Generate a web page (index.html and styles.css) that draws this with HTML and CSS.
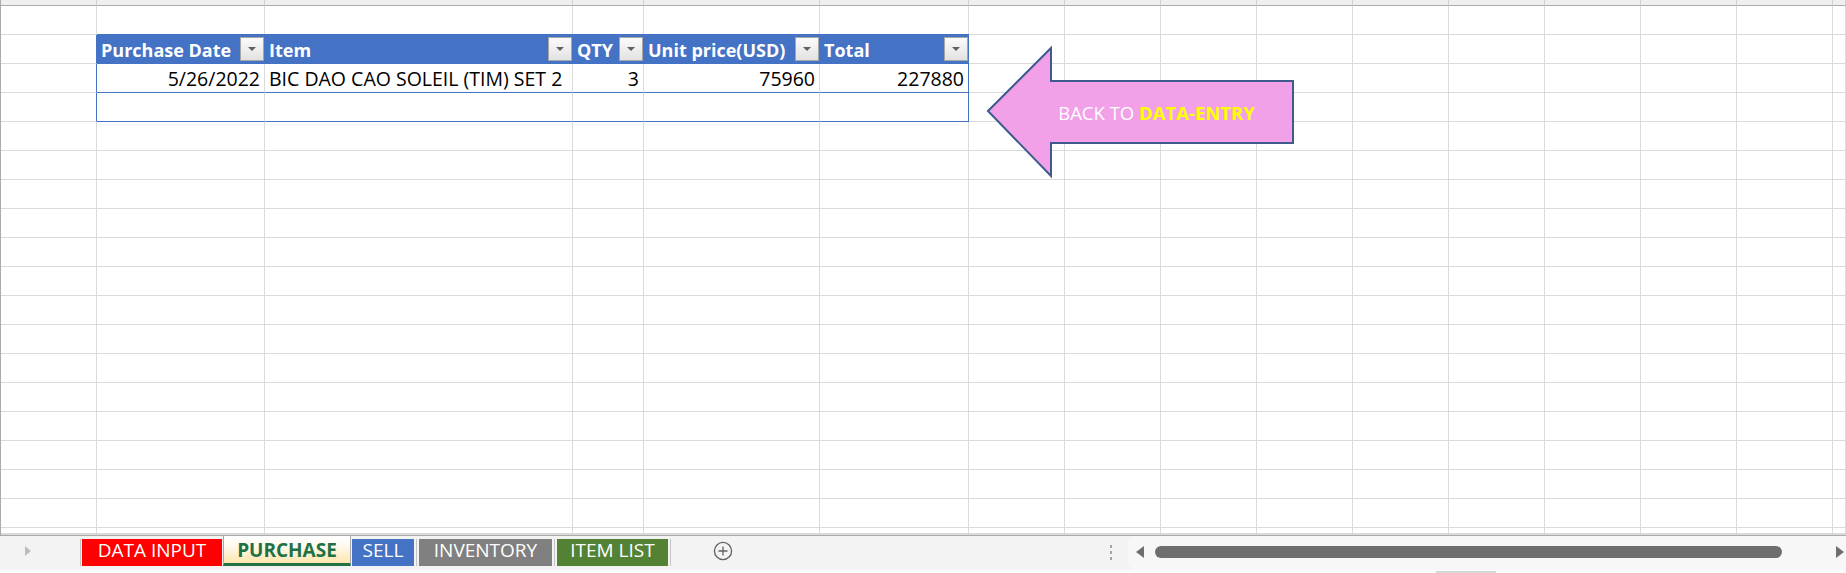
FILE: index.html
```html
<!DOCTYPE html>
<html>
<head>
<meta charset="utf-8">
<title>PURCHASE</title>
<link rel="stylesheet" href="styles.css">
</head>
<body>
<div class="app">
  <div class="sheet">
    <i class="c h0"></i><i class="c h0"></i><i class="c h0"></i><i class="c h0"></i><i class="c h0"></i><i class="c h0"></i><i class="c h0"></i><i class="c h0"></i><i class="c h0"></i><i class="c h0"></i><i class="c h0"></i><i class="c h0"></i><i class="c h0"></i><i class="c h0"></i><i class="c h0"></i><i class="c h0"></i>

    <i class="c"></i><i class="c"></i><i class="c"></i><i class="c"></i><i class="c"></i><i class="c"></i><i class="c"></i><i class="c"></i><i class="c"></i><i class="c"></i><i class="c"></i><i class="c"></i><i class="c"></i><i class="c"></i><i class="c"></i><i class="c"></i>

    <i class="c tl"></i>
    <div class="th"><span class="tht">Purchase Date</span><b class="dd"></b></div>
    <div class="th"><span class="tht">Item</span><b class="dd"></b></div>
    <div class="th"><span class="tht">QTY</span><b class="dd"></b></div>
    <div class="th"><span class="tht">Unit price(USD)</span><b class="dd"></b></div>
    <div class="th"><span class="tht">Total</span><b class="dd"></b></div>
    <i class="c"></i><i class="c"></i><i class="c"></i><i class="c"></i><i class="c"></i><i class="c"></i><i class="c"></i><i class="c"></i><i class="c"></i><i class="c"></i>

    <i class="c tl"></i>
    <div class="c td num">5/26/2022</div>
    <div class="c td">BIC DAO CAO SOLEIL (TIM) SET 2</div>
    <div class="c td num">3</div>
    <div class="c td num">75960</div>
    <div class="c td num tr">227880</div>
    <i class="c"></i><i class="c"></i><i class="c"></i><i class="c"></i><i class="c"></i><i class="c"></i><i class="c"></i><i class="c"></i><i class="c"></i><i class="c"></i>

    <i class="c tl"></i>
    <div class="c td"></div>
    <div class="c td"></div>
    <div class="c td"></div>
    <div class="c td"></div>
    <div class="c td tr"></div>
    <i class="c"></i><i class="c"></i><i class="c"></i><i class="c"></i><i class="c"></i><i class="c"></i><i class="c"></i><i class="c"></i><i class="c"></i><i class="c"></i>

    <i class="c"></i><i class="c"></i><i class="c"></i><i class="c"></i><i class="c"></i><i class="c"></i><i class="c"></i><i class="c"></i><i class="c"></i><i class="c"></i><i class="c"></i><i class="c"></i><i class="c"></i><i class="c"></i><i class="c"></i><i class="c"></i>
    <i class="c"></i><i class="c"></i><i class="c"></i><i class="c"></i><i class="c"></i><i class="c"></i><i class="c"></i><i class="c"></i><i class="c"></i><i class="c"></i><i class="c"></i><i class="c"></i><i class="c"></i><i class="c"></i><i class="c"></i><i class="c"></i>
    <i class="c"></i><i class="c"></i><i class="c"></i><i class="c"></i><i class="c"></i><i class="c"></i><i class="c"></i><i class="c"></i><i class="c"></i><i class="c"></i><i class="c"></i><i class="c"></i><i class="c"></i><i class="c"></i><i class="c"></i><i class="c"></i>
    <i class="c"></i><i class="c"></i><i class="c"></i><i class="c"></i><i class="c"></i><i class="c"></i><i class="c"></i><i class="c"></i><i class="c"></i><i class="c"></i><i class="c"></i><i class="c"></i><i class="c"></i><i class="c"></i><i class="c"></i><i class="c"></i>
    <i class="c"></i><i class="c"></i><i class="c"></i><i class="c"></i><i class="c"></i><i class="c"></i><i class="c"></i><i class="c"></i><i class="c"></i><i class="c"></i><i class="c"></i><i class="c"></i><i class="c"></i><i class="c"></i><i class="c"></i><i class="c"></i>
    <i class="c"></i><i class="c"></i><i class="c"></i><i class="c"></i><i class="c"></i><i class="c"></i><i class="c"></i><i class="c"></i><i class="c"></i><i class="c"></i><i class="c"></i><i class="c"></i><i class="c"></i><i class="c"></i><i class="c"></i><i class="c"></i>
    <i class="c"></i><i class="c"></i><i class="c"></i><i class="c"></i><i class="c"></i><i class="c"></i><i class="c"></i><i class="c"></i><i class="c"></i><i class="c"></i><i class="c"></i><i class="c"></i><i class="c"></i><i class="c"></i><i class="c"></i><i class="c"></i>
    <i class="c"></i><i class="c"></i><i class="c"></i><i class="c"></i><i class="c"></i><i class="c"></i><i class="c"></i><i class="c"></i><i class="c"></i><i class="c"></i><i class="c"></i><i class="c"></i><i class="c"></i><i class="c"></i><i class="c"></i><i class="c"></i>
    <i class="c"></i><i class="c"></i><i class="c"></i><i class="c"></i><i class="c"></i><i class="c"></i><i class="c"></i><i class="c"></i><i class="c"></i><i class="c"></i><i class="c"></i><i class="c"></i><i class="c"></i><i class="c"></i><i class="c"></i><i class="c"></i>
    <i class="c"></i><i class="c"></i><i class="c"></i><i class="c"></i><i class="c"></i><i class="c"></i><i class="c"></i><i class="c"></i><i class="c"></i><i class="c"></i><i class="c"></i><i class="c"></i><i class="c"></i><i class="c"></i><i class="c"></i><i class="c"></i>
    <i class="c"></i><i class="c"></i><i class="c"></i><i class="c"></i><i class="c"></i><i class="c"></i><i class="c"></i><i class="c"></i><i class="c"></i><i class="c"></i><i class="c"></i><i class="c"></i><i class="c"></i><i class="c"></i><i class="c"></i><i class="c"></i>
    <i class="c"></i><i class="c"></i><i class="c"></i><i class="c"></i><i class="c"></i><i class="c"></i><i class="c"></i><i class="c"></i><i class="c"></i><i class="c"></i><i class="c"></i><i class="c"></i><i class="c"></i><i class="c"></i><i class="c"></i><i class="c"></i>
    <i class="c"></i><i class="c"></i><i class="c"></i><i class="c"></i><i class="c"></i><i class="c"></i><i class="c"></i><i class="c"></i><i class="c"></i><i class="c"></i><i class="c"></i><i class="c"></i><i class="c"></i><i class="c"></i><i class="c"></i><i class="c"></i>
    <i class="c"></i><i class="c"></i><i class="c"></i><i class="c"></i><i class="c"></i><i class="c"></i><i class="c"></i><i class="c"></i><i class="c"></i><i class="c"></i><i class="c"></i><i class="c"></i><i class="c"></i><i class="c"></i><i class="c"></i><i class="c"></i>
    <i class="c"></i><i class="c"></i><i class="c"></i><i class="c"></i><i class="c"></i><i class="c"></i><i class="c"></i><i class="c"></i><i class="c"></i><i class="c"></i><i class="c"></i><i class="c"></i><i class="c"></i><i class="c"></i><i class="c"></i><i class="c"></i>

    <i class="c"></i><i class="c"></i><i class="c"></i><i class="c"></i><i class="c"></i><i class="c"></i><i class="c"></i><i class="c"></i><i class="c"></i><i class="c"></i><i class="c"></i><i class="c"></i><i class="c"></i><i class="c"></i><i class="c"></i><i class="c"></i>

    <div class="arrow">
      <svg class="arrow-shape" width="320" height="145" viewBox="0 0 320 145">
        <polygon points="7,71 70,8 70,41 312,41 312,103 70,103 70,136" fill="#f2a1e8" stroke="#3f5b8d" stroke-width="2" stroke-linejoin="miter"/>
      </svg>
      <span class="arrow-label">BACK TO <b class="hl">DATA-ENTRY</b></span>
    </div>
  </div>

  <div class="tabs">
    <div class="nav"><i class="nav-tri"></i></div>
    <i class="sep"></i>
    <div class="tab t-input">DATA INPUT</div>
    <div class="tab t-purchase">PURCHASE</div>
    <div class="tab t-sell">SELL</div>
    <i class="sep sep-wide"></i>
    <div class="tab t-inv">INVENTORY</div>
    <i class="sep sep-wide"></i>
    <div class="tab t-item">ITEM LIST</div>
    <i class="sep sep-wide"></i>
    <svg class="plus" width="20" height="20" viewBox="0 0 20 20">
      <circle cx="10" cy="10" r="8.6" fill="none" stroke="#616161" stroke-width="1.3"/>
      <path d="M10 5.5v9M5.5 10h9" stroke="#616161" stroke-width="1.3" fill="none"/>
    </svg>
    <div class="right">
      <div class="dots"><i></i><i></i><i></i></div>
      <div class="hscroll">
        <i class="arr-l"></i>
        <i class="thumb"></i>
        <i class="arr-r"></i>
      </div>
    </div>
  </div>
  <div class="status"><i class="grip"></i></div>
</div>
</body>
</html>
```

FILE: styles.css
```css
html, body {
  margin: 0;
  padding: 0;
  background: #ffffff;
}
body {
  width: 1846px;
  height: 573px;
  overflow: hidden;
  font-family: "Open Sans", "Liberation Sans", sans-serif;
}
.app {
  width: 1846px;
  height: 573px;
  display: flex;
  flex-direction: column;
}

/* ---------- sheet grid ---------- */
.sheet {
  position: relative;
  height: 536px;
  flex: none;
  box-sizing: border-box;
  border-left: 1px solid #ababab;
  border-bottom: 1px solid #ababab;
  display: grid;
  grid-template-columns: 96px 168px 308px 71px 176px 149px repeat(9, 96px) 1fr;
  grid-template-rows: 6px repeat(18, 29px) 1fr;
  overflow: hidden;
}
.c {
  display: flex;
  align-items: flex-end;
  box-sizing: border-box;
  min-width: 0;
  min-height: 0;
  overflow: hidden;
  white-space: nowrap;
  border-right: 1px solid #dadada;
  border-bottom: 1px solid #dadada;
  font-style: normal;
}
.h0 {
  background: #efefef;
  border-right-color: #d0d0d0;
  border-bottom-color: #ababab;
}
.tl {
  border-right-color: #4472c4;
}

/* ---------- table ---------- */
.th {
  margin-top: -1px;
  display: flex;
  align-items: stretch;
  box-sizing: border-box;
  min-width: 0;
  padding-left: 4px;
  background: #4472c4;
  border-right: 1px solid #4472c4;
  border-bottom: 1px solid #4472c4;
  overflow: hidden;
  white-space: nowrap;
}
.tht {
  align-self: flex-end;
  padding-bottom: 4px;
  font-size: 18px;
  line-height: 1;
  font-weight: 700;
  color: #ffffff;
}
.dd {
  position: relative;
  align-self: flex-start;
  flex: none;
  margin-top: 3px;
  margin-left: auto;
  width: 24px;
  height: 24px;
  box-sizing: border-box;
  border: 1px solid #a6a6a6;
  background: linear-gradient(#fbfbfb, #e2e2e2);
}
.dd::after {
  content: "";
  position: absolute;
  left: 7px;
  top: 9px;
  border-left: 4px solid transparent;
  border-right: 4px solid transparent;
  border-top: 4px solid #606060;
}
.td {
  padding: 0 4px 4px 4px;
  font-size: 19.5px;
  line-height: 1;
  color: #000000;
  border-bottom-color: #4472c4;
}
.num {
  justify-content: flex-end;
}
.tr {
  border-right-color: #4472c4;
}

/* ---------- arrow shape ---------- */
.arrow {
  position: absolute;
  left: 980px;
  top: 40px;
  width: 320px;
  height: 145px;
  display: flex;
  align-items: center;
  justify-content: center;
  box-sizing: border-box;
  padding-left: 31px;
}
.arrow-shape {
  position: absolute;
  left: 0;
  top: 0;
}
.arrow-label {
  position: relative;
  font-size: 18.5px;
  color: #ffffff;
  white-space: nowrap;
}
.hl {
  color: #ffff00;
  font-weight: 700;
}

/* ---------- sheet tabs ---------- */
.tabs {
  height: 34px;
  flex: none;
  display: flex;
  align-items: flex-start;
  background: #f3f3f3;
}
.nav {
  width: 80px;
  height: 34px;
  flex: none;
}
.nav-tri {
  display: block;
  margin: 10px 0 0 25px;
  width: 0;
  height: 0;
  border-left: 6px solid #bdbdbd;
  border-top: 5px solid transparent;
  border-bottom: 5px solid transparent;
}
.sep {
  display: block;
  width: 1px;
  height: 27px;
  margin-top: 3px;
  background: #c4c4c4;
  flex: none;
}
.sep-wide {
  margin-left: 2px;
  margin-right: 2px;
}
.tab {
  flex: none;
  height: 27px;
  margin-top: 3px;
  box-sizing: border-box;
  display: flex;
  align-items: center;
  justify-content: center;
  padding-bottom: 5px;
  font-size: 19px;
  color: #ffffff;
  white-space: nowrap;
}
.t-input {
  margin-left: 1px;
  width: 140px;
  background: #ff0000;
}
.t-purchase {
  margin-left: 1px;
  margin-top: 0;
  width: 128px;
  height: 30px;
  padding-bottom: 0;
  border-left: 1px solid #a9a9a9;
  border-right: 1px solid #a9a9a9;
  border-bottom: 3px solid #217346;
  background: linear-gradient(#ffffff 0%, #fffaf0 35%, #fde6ad 100%);
  color: #1e7145;
  font-weight: 700;
}
.t-sell {
  margin-left: 1px;
  width: 62px;
  background: #4472c4;
}
.t-inv {
  width: 133px;
  background: #808080;
}
.t-item {
  width: 111px;
  background: #548235;
}
.plus {
  flex: none;
  margin: 5px 0 0 40px;
}
.right {
  margin-left: auto;
  width: 741px;
  height: 34px;
  display: flex;
  flex: none;
}
.dots {
  width: 23px;
  height: 34px;
  flex: none;
  display: flex;
  flex-direction: column;
  align-items: flex-start;
  padding: 9px 0 0 5px;
  box-sizing: border-box;
  gap: 3px;
}
.dots i {
  display: block;
  width: 2px;
  height: 3px;
  background: #a6a6a6;
}
.hscroll {
  flex: 1;
  height: 34px;
  display: flex;
  align-items: flex-start;
  padding-left: 8px;
  box-sizing: border-box;
  background: #f7f7f7;
  border-radius: 8px 0 0 8px;
  overflow: hidden;
}
.arr-l {
  display: block;
  flex: none;
  margin-top: 46px;
  margin-top: 10px;
  width: 0;
  height: 0;
  border-right: 8px solid #6e6e6e;
  border-top: 6px solid transparent;
  border-bottom: 6px solid transparent;
}
.thumb {
  display: block;
  flex: none;
  margin: 10px 0 0 11px;
  width: 627px;
  height: 12px;
  border-radius: 6px;
  background: #6e6e6e;
}
.arr-r {
  display: block;
  flex: none;
  margin: 10px 0 0 auto;
  width: 0;
  height: 0;
  border-left: 8px solid #6e6e6e;
  border-top: 6px solid transparent;
  border-bottom: 6px solid transparent;
  margin-right: 2px;
}
.status {
  height: 3px;
  flex: none;
  background: #fbfbfb;
  border-top: 0;
  display: flex;
}
.grip {
  display: block;
  margin: 1px 0 0 1436px;
  width: 60px;
  height: 2px;
  background: #d6d6d6;
}
```
